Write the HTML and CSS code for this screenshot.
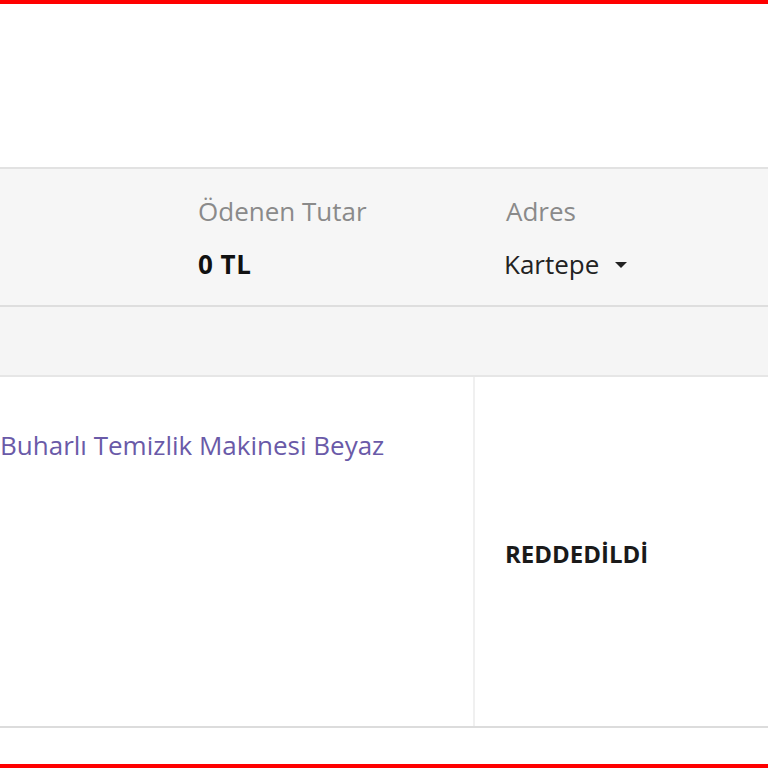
FILE: index.html
```html
<!DOCTYPE html>
<html lang="tr">
<head>
<meta charset="utf-8">
<link rel="stylesheet" href="styles.css">
</head>
<body>
<div class="frame">
  <div class="spacer"></div>
  <div class="summary">
    <div class="col col-empty"></div>
    <div class="col col-paid">
      <div class="label">Ödenen Tutar</div>
      <div class="value bold">0 TL</div>
    </div>
    <div class="col col-address">
      <div class="label">Adres</div>
      <div class="value address">Kartepe <span class="caret"></span></div>
    </div>
  </div>
  <div class="band"></div>
  <div class="row">
    <div class="cell cell-product"><a class="product">Buharlı Temizlik Makinesi Beyaz</a></div>
    <div class="cell cell-status"><span class="status">REDDEDİLDİ</span></div>
  </div>
  <div class="bottom-space"></div>
</div>
</body>
</html>
```
FILE: styles.css
```css
* { box-sizing: border-box; }
html, body { margin: 0; padding: 0; background: #fff; }
body { font-family: "Open Sans", "Liberation Sans", sans-serif; color: #222; }
.frame {
  width: 768px;
  height: 768px;
  border-top: 4px solid #ff0000;
  border-bottom: 4px solid #ff0000;
  display: flex;
  flex-direction: column;
  overflow: hidden;
}
.spacer { height: 163px; flex: none; }
.summary {
  flex: none;
  height: 140px;
  background: #f6f6f6;
  border-top: 2px solid #e2e2e2;
  border-bottom: 2px solid #dedede;
  display: grid;
  grid-template-columns: 198px 308px 1fr;
  padding-top: 27px;
}
.label { font-size: 26px; color: #8a8a8a; line-height: 30px; }
.value { font-size: 26px; color: #222; line-height: 30px; margin-top: 23px; }
.bold { font-weight: 700; color: #111; font-size: 26px; letter-spacing: 0.5px; }
.col-address .value { margin-left: -2px; }
.address { display: flex; align-items: center; }
.caret {
  width: 0; height: 0;
  border-left: 6px solid transparent;
  border-right: 6px solid transparent;
  border-top: 6px solid #222;
  margin-left: 16px;
  margin-top: 1px;
}
.band {
  flex: none;
  height: 70px;
  background: #f5f5f5;
  border-bottom: 2px solid #e6e6e6;
}
.row {
  flex: none;
  height: 351px;
  display: grid;
  grid-template-columns: 475px 1fr;
  border-bottom: 2px solid #dcdcdc;
}
.cell-product { padding-top: 53px; border-right: 2px solid #f0f0f0; }
.product { font-size: 26px; color: #6a5aa8; line-height: 30px; text-decoration: none; }
.cell-status { display: flex; align-items: center; padding-left: 30px; padding-top: 4px; }
.status { font-size: 24px; font-weight: 700; color: #1a1a1a; }
.bottom-space { flex: 1; }
```
